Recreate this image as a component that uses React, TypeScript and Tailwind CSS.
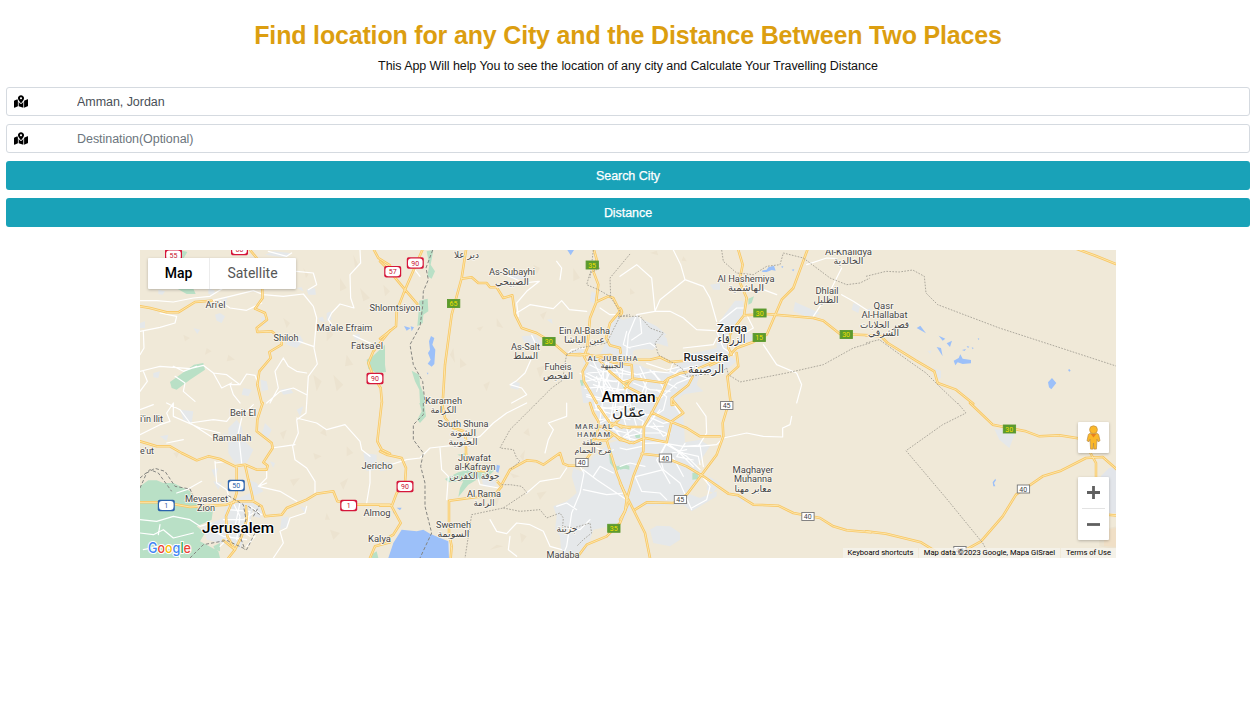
import { FaMapMarkedAlt } from "react-icons/fa";

type Tile = {
  x: number;
  y: number;
  urban?: string;
  green?: string;
  water?: string;
  shade?: string;
  minor?: string;
  major?: string;
  border?: string;
  dots?: string;
};

// Every tile is drawn at three times the map scale, from its own origin.
const tiles: Tile[] = [
  {
    x: 140,
    y: 248,
    urban:
      "M225 200L240 195 255 205 245 225 230 218ZM365 205L385 215 375 235 362 228ZM245 155L262 148 258 168 245 170ZM55 125L75 130 68 140 55 138ZM160 240L180 245 172 258ZM40 375L60 370 55 390 40 388ZM500 125L525 120 528 140 505 140ZM440 270L480 262 490 280 470 300 440 290ZM560 195L572 190 575 215 560 218ZM420 425L450 420 460 435 430 440ZM362 395L380 400 385 425 365 430ZM0 225L15 220 15 240 0 240ZM640 260L660 258 658 275 645 275ZM375 20L400 10 450 15 440 28 400 24ZM205 120L225 128 220 142 205 138ZM235 75L262 80 270 98 245 96ZM470 120L485 118 490 130ZM310 420L335 425 325 445 305 440ZM535 210L548 206 555 222 540 220Z",
    green:
      "M90 402L120 380 162 350 190 345 195 365 150 395 110 425 95 420ZM112 122L160 122 167 138 140 138ZM120 6L142 12 130 32 122 28ZM735 290L735 350 738 372 710 375 685 362 680 335 698 325Z",
    shade:
      "M490 60L505 80 498 90ZM560 230L580 260 560 280ZM600 90L620 120 600 130ZM580 380L610 410 590 430ZM265 320L285 335 260 340ZM430 210L450 225 440 240ZM520 380L545 400 530 430ZM660 120L690 150 670 160ZM130 260L150 270 135 280ZM620 320L640 350 615 355ZM640 20L655 50 645 60ZM200 300L215 310 195 320Z",
    minor:
      "M0 250L60 238 105 225 110 205 60 195M215 158L270 145 340 128 370 140 430 145 490 138 520 175 530 210 522 300 532 348 505 385 500 465M660 6L662 45 630 80 632 150 642 180 600 168 575 195 565 215 585 245M240 160L270 180 320 187 365 165M425 275L470 278 520 295M640 262L700 290M0 370L40 360 60 355 100 358 150 362 190 352 220 375 260 380 300 410 320 378 345 382 352 400M10 250L12 300 0 320M10 370L22 400 0 430M105 385L135 405 130 430 165 460M430 330L405 370 415 420 390 465M0 158L50 158 100 162 160 150 210 145 250 120M470 70L520 75 530 110 505 125M430 330L445 355 470 370 500 375M380 465L420 430 460 420 500 440M300 410L270 410 280 440 300 465M100 355L130 370 170 355M385 10L440 25 455 15M220 375L245 420 275 405",
    major:
      "M0 175L30 180 80 193 115 193 165 162 215 158M330 6L350 30 365 90 368 150 345 182 375 195 381 215 350 240 352 252 395 250 425 275 425 290 388 312 392 330 358 370 352 410 365 465M702 6L715 30 750 52M750 248L700 310 685 345 700 385 722 420 726 465",
  },
  {
    x: 380,
    y: 248,
    urban:
      "M715 205L750 235 750 465 610 465 600 400 612 350 660 320 682 270 680 240ZM425 265L465 262 490 290 440 300ZM560 315L610 300 610 318ZM400 400L420 405 415 425 390 420ZM635 130L655 140 650 170 630 160ZM385 80L440 78 440 92 395 94ZM530 380L560 385 545 400ZM500 215L515 212 518 228ZM220 120L230 125 225 135Z",
    green:
      "M140 10L160 6 152 50 165 70 155 92 142 85 148 50ZM118 158L143 152 145 190 130 200 128 225 112 235 115 200ZM0 290L15 300 12 345 0 330ZM95 368L118 380 120 410 132 440 135 465 120 465 118 425 105 400ZM600 395L612 400 605 415Z",
    water:
      "M153 264L163 270 157 290 166 305 163 348 155 356 143 347 152 335 144 315 150 305 147 280ZM72 234L92 240 80 248ZM92 235L102 238 95 250ZM562 6L582 6 572 22ZM140 374L145 374 144 380Z",
    shade:
      "M290 240L310 235 300 250ZM220 300L225 345 210 320ZM470 360L500 350 480 390ZM240 330L260 350 240 360ZM480 200L500 190 490 215ZM580 60L600 90 580 100ZM350 210L370 240 350 235ZM310 410L330 400 320 430ZM460 50L480 60 470 80ZM10 110L30 130 15 145ZM580 240L595 260 570 270Z",
    minor:
      "M415 205L410 165 440 130 478 100M410 195L450 170 520 182 545 158 568 185 620 190M475 100L430 105 400 90 350 70M455 262L470 295 455 330 435 375 410 398 390 410 425 420 440 440 395 465M560 320L575 305 620 300M660 180L690 200 720 200M540 95L545 60 530 40M625 375L680 370 750 380M615 400L660 390 700 400 750 395M640 340L660 380 690 425M680 340L670 370 650 430M700 350L720 385 710 440M640 410L700 430 750 420M740 250L730 290 750 300M620 440L680 455 720 440M690 370L670 420 690 460M730 340L725 400 745 440M120 85L100 60",
    major:
      "M258 6L245 90 215 200 195 350 188 465M245 92L275 88 295 105 320 105 330 118 350 118 370 150 397 142 405 200 425 240 470 255 520 285 560 320 600 322 625 318M127 6L75 125 50 190 48 235 0 272M0 40L25 65 75 125 112 168M642 6L650 35 640 70 655 110 648 165 630 210 622 300 612 325 622 345 608 370 612 400 630 430 650 465M648 162L685 145 700 150 720 190 690 225 678 270 690 292 720 300 722 315M560 320L600 318 650 325",
    border: "M158 6L138 60 145 95 130 130 128 175 120 235 90 290 100 350 128 400 135 465",
    dots: "M750 18L690 90 692 145M660 60L630 75 620 110 655 125 690 145 720 190 715 210M560 320L552 360 550 395 515 420 470 465M560 320L600 300 680 285 720 205 750 200M640 6L630 90",
  },
  {
    x: 620,
    y: 248,
    urban:
      "M345 158L368 158 375 198 350 225 330 275 325 320 350 340 300 380 240 375 230 410 250 430 180 440 150 465 0 465 0 345 60 350 100 375 150 370 180 345 200 320 290 300 290 235 310 205ZM20 235L60 210 110 235 140 260 100 280 110 300 45 305 20 330ZM525 162L600 195 570 210 520 190ZM270 110L300 105 300 125 280 125ZM380 255L400 260 395 280 360 285ZM700 165L720 175 715 195 695 185Z",
    green: "M385 152L402 145 395 165 385 170ZM5 405L25 400 25 420 10 420Z",
    water: "M425 68L440 65 445 58 462 53 467 68 455 66 440 72 428 72ZM515 65L523 64 520 70ZM483 56L490 54 488 60Z",
    shade: "M90 15L110 8 115 22ZM190 25L200 40 185 38ZM30 120L45 135 30 140Z",
    minor:
      "M105 190L150 190 190 210 230 245 285 248M105 190L120 155 195 95 182 50 160 6M195 95L250 115 270 150 290 220M105 190L50 200 25 260 20 325M105 190L95 90 50 50 0 85M560 50L620 30 650 32M665 60L630 130 580 205M665 140L700 160 750 192M380 200L400 240 375 255M430 290L470 350 530 375 545 410 530 465M380 130L430 125 470 140M20 300L90 285 110 300M0 365L50 380 100 370 150 375M40 405L90 425 150 430M60 380L80 420 70 460M100 370L130 420 110 465M200 390L150 370 160 340M290 250L310 300 340 320M300 220L350 180 370 180M190 300L280 290 290 270M230 370L280 380 300 370M130 400L170 420",
    major:
      "M355 6L368 50 358 100 380 150 372 202 350 230 330 260 325 300 335 320M372 202L440 198 520 205 580 210 610 218 660 258 750 262M562 6L520 120 485 155 440 260 400 282 350 300 315 335M45 335L90 335 120 328 150 342 195 338M310 335L270 352M350 315L355 355 322 385 332 465M0 180Q12 192 0 204",
    dots: "M305 6L310 40 350 75 400 80 440 55 480 50 490 15 550 30 630 90 680 110 720 105 750 90M0 205L60 205 90 240 130 255 105 285 115 320 150 340 185 360 200 385 300 375 320 360 325 380 360 402 500 375 610 350 700 300 750 285",
  },
  {
    x: 866,
    y: 248,
    urban: "M200 360L225 368 225 390 212 395ZM0 185L15 180 10 200ZM45 195L55 200 50 215ZM185 308L197 308 192 318Z",
    water:
      "M152 240L163 233 180 256ZM218 263L238 272 230 278ZM242 286L258 278 252 297ZM212 297L225 300 230 325ZM288 306L300 303 296 309ZM302 294L310 296 306 300ZM317 298L323 300 320 304ZM335 270L340 272 338 277ZM263 338L278 330 283 319 290 332 315 336 315 346 290 348 275 343 268 352ZM546 403L558 390 571 405 556 424 549 418ZM606 366L610 363 614 368 610 371Z",
    major: "M630 2L690 24 750 48M0 262L45 265 65 285 150 338 205 370 215 405 270 425 322 467",
    dots: "M0 85L60 70 100 72 140 66 175 85 180 135 215 170 400 240 600 305 753 355M0 285L40 275 130 340 180 375 220 415 275 467",
  },
  {
    x: 140,
    y: 403,
    urban:
      "M265 75L290 50 305 70 310 110 340 140 320 180 285 180 265 150ZM260 300L330 270 345 300 330 360 300 440 240 420 200 410 190 370 250 345ZM325 230L350 240 370 265 340 280ZM425 345L445 340 445 370 420 380ZM375 60L395 80 380 110 365 95ZM670 150L710 155 710 200 680 205ZM215 200L235 195 225 225ZM60 100L85 95 80 115ZM480 310L500 315 495 330ZM220 235L245 240 235 260ZM470 20L490 10 480 40ZM120 20L160 25 155 60 130 50ZM345 300L370 320 360 345 340 340ZM250 90L262 95 255 110ZM390 175L405 180 400 195Z",
    green: "M0 250L25 232 50 232 70 240 100 240 150 265 155 280 130 292 220 312 215 350 170 370 195 390 180 415 235 445 240 465 0 465ZM220 430L240 420 240 445 225 440ZM698 452L710 445 715 465 695 465Z",
    shade:
      "M540 90L555 75 560 100ZM600 240L625 225 610 260ZM420 90L440 80 430 110ZM570 380L600 390 580 410ZM520 150L545 160 525 170ZM100 150L120 145 110 165ZM450 230L480 225 460 250ZM620 130L640 150 620 160ZM560 330L570 350 555 350Z",
    minor:
      "M0 95L60 65 90 55 80 30 100 0M80 0L120 20 150 60 220 50 260 55 280 30M0 20L40 5M500 0L498 30 470 50 475 90 458 130 465 170 500 195 525 235 525 270M395 135L430 130 465 125M470 45L530 60 560 80 615 65 660 115 665 140 690 160M690 190L690 240 680 300M305 45L295 90 305 180M225 175L230 240 260 260 270 290M130 110L80 120M100 0L100 40 180 75 240 90M380 200L380 225 355 250 420 265 470 295M225 180L260 175M500 310L495 330 450 345 440 375 420 385 430 420 400 465M0 350L50 355 100 340 150 350 180 370 215 360M0 390L40 395 70 380 100 405 160 390M10 440L60 430 110 440 120 465M110 270L140 260 185 235M150 60L165 70 220 105M60 365L55 395M265 320L330 325 320 380 260 390M280 300L300 340 290 410M250 350L310 350 340 330M240 370L270 400 240 430M300 300L285 370 330 400M330 310L365 335M210 380L250 400 320 410M355 250L380 240M290 20L320 25 340 5M330 350L345 400 320 430",
    major:
      "M0 115L50 130 90 130 125 150 170 172 205 160 240 168 285 190 315 185 350 200 380 200 383 188 370 178 398 135 395 120 350 85 352 50 368 0M290 190L290 270 280 300M315 185L325 230 335 270 340 295M0 298L50 298 100 303 150 312 260 305 285 295 340 295 365 310 375 340 425 335 440 315 500 290 530 272 580 265 592 295 650 305 750 305M275 300L258 340 262 400 285 440 265 465M250 412L285 440 305 400 320 350 318 310M725 0L712 115 725 140 750 152M750 418L705 430 690 465",
    border: "M0 255L20 210 45 196 75 205 105 250 150 258 160 280M0 225L30 200 55 210 95 265M265 278L310 305 318 350 300 400 315 440M150 465L190 425 260 412 320 440 345 390M325 310L360 335M340 340L358 308",
  },
  {
    x: 380,
    y: 403,
    urban:
      "M580 195L605 205 640 160 690 120 750 100 750 300 735 350 690 370 640 380 620 440 590 465 545 465 540 400 525 380 530 340 520 310 560 295 590 270 575 220ZM650 0L750 0 750 110 680 110 650 60ZM0 175L40 180 30 200 0 205ZM305 225L350 235 345 250 310 250ZM235 105L270 100 275 130 240 130Z",
    green: "M118 0L132 0 138 40 120 60 112 50 125 25ZM195 228L235 208 265 200 325 200 340 185 345 200 320 225 290 230 265 245 235 282 240 255 250 235 205 238ZM232 155L260 150 255 165ZM685 135L695 165 710 190 730 185 748 188 748 200 725 195 708 205 690 180Z",
    water: "M65 380L110 385 130 380 150 392 205 415 207 465 25 465 40 420ZM350 185L360 188 355 210 348 205ZM50 314L65 314 60 322ZM38 324L46 326 42 332Z",
    shade: "M420 160L435 140 430 175ZM340 290L360 280 350 310ZM330 440L350 425 370 430ZM470 270L500 265 480 290ZM430 90L445 75 450 100ZM420 390L440 400 425 420ZM390 210L420 220 400 225Z",
    minor:
      "M180 135L185 200 205 220 200 290M0 195L80 170 120 165 150 135 240 125 300 100 340 60 380 30 440 0M600 190L612 210 600 270 575 330 560 430 545 465M610 200L650 230 740 290M330 350L350 385 380 392 410 360 450 365 490 385 510 430M495 150L505 110 520 80 505 60 560 40 560 0M440 270L480 235 540 225 560 195M640 130L680 150 700 140M610 260L680 275 735 270M640 220L660 190 700 210M590 320L560 300 530 310M510 430L545 440M290 215L300 245 355 255M390 400L385 440 410 460M560 375L600 380 630 350M670 20L700 80 740 90M660 60L700 40 750 50M700 0L690 60 720 100M650 10L710 20 745 5",
    major:
      "M0 145L20 155 65 165 78 195 75 240 50 270 35 310 62 360 40 395 0 418M0 308L35 308M186 0L195 45 220 75 252 85 258 110 258 150 265 190 290 203 320 205M350 233L365 250 340 280 290 282 207 293 207 390 215 430 212 465M365 245L390 200 440 172 470 175 490 185 540 150 550 182 565 188 600 188M618 170L640 140 638 112M630 0L640 30 655 55 652 100 638 112 680 112 700 95 750 120M680 112L695 160 710 210 745 300 720 360 680 400 620 425 590 465M655 10L690 60 750 75",
    border: "M130 0L130 35 100 65 100 110 130 150 122 190 135 240 135 310 155 390 120 465",
    dots: "M470 0L390 80 360 135 400 140 410 165 420 175 390 200M365 245L390 245 425 250 440 268 370 315 275 335 265 400 255 465M370 315L420 325 480 320 500 345 540 330 550 345 548 370 580 375 630 360 635 390 610 410 590 430",
  },
  {
    x: 620,
    y: 403,
    urban:
      "M0 0L160 0 190 60 180 120 240 110 270 130 230 190 250 215 200 270 240 285 290 265 290 280 215 325 190 305 50 310 20 330 0 330ZM90 380L110 368 150 370 180 390 180 410 150 430 100 420ZM345 280L380 285 370 300ZM265 220L300 240 280 270 260 260Z",
    green: "M217 210L235 205 235 228 217 230ZM45 95L60 95 58 105 48 105ZM0 190L12 188 18 182 28 195 12 197 0 200Z",
    minor:
      "M310 105L380 90 430 100 488 102 488 75 510 65 515 40M230 0L258 40 260 90 235 130 190 130 140 122M135 122L200 160 240 200M140 120L120 160 130 200 180 240 215 320M45 220L65 265 120 270 140 290M75 190L30 180 0 190M130 200L50 220M235 130L290 125 310 105M25 30L70 55 60 90 20 70M0 20L40 40 90 35M20 100L70 90 120 90M100 60L130 100 150 90M150 130L190 150 235 160 240 185M250 225L270 250 260 290 215 315M65 130L20 140 0 135M155 150L200 140M120 20L80 70 130 70M300 255L250 225M160 165L190 220",
    major:
      "M95 30L72 70 70 145 40 220 20 290 15 325 0 350M65 152L120 158 200 190 250 220 325 272 355 277 400 305 475 308 520 330 600 345 640 370 680 382 752 388M0 240L25 290 75 390 90 465M320 20L308 60 310 100 290 155 245 215 200 275 160 300 80 298 45 320M95 28L150 55 200 75 240 100 300 100M0 110L40 120 75 105 140 118 155 55 190 30 165 0M0 72L70 72",
  },
  {
    x: 866,
    y: 403,
    urban: "M385 78L450 85 430 135 400 110Z",
    shade: "M700 380L753 370 753 440 700 430Z",
    water: "M380 238L388 227 390 232 384 240 388 250 382 250Z",
    major:
      "M312 0L380 65 480 85 520 100 580 97 650 108M665 135L690 180 690 225M0 385L60 392 165 418 220 452 300 440 345 415 410 340 450 275 530 220 585 203 660 165 710 162 753 200M725 335L753 338",
    dots: "M275 0L300 30 230 65 120 143 240 285 350 420 375 465",
  },
  // Amman
  {
    x: 560,
    y: 310,
    urban:
      "M140 60L170 35 235 15 240 60 215 100 220 135 200 150 150 60ZM200 25L280 50 320 85 325 110 290 100 280 120 240 115ZM70 150L130 130 220 165 300 185 350 190 350 150 430 160 400 200 385 240 350 270 370 320 375 395 330 420 240 430 150 350 100 300 75 200Z",
    green: "M193 220L205 216 205 232 193 230ZM60 212L70 208 70 228 64 226ZM225 375L240 373 240 383 228 383Z",
    minor:
      "M80 190L120 210 170 215M75 235L130 230 190 240M90 165L130 185 130 260M100 300L180 290 250 300M110 200L130 260 120 330M140 210L170 260 160 330M80 260L140 275 200 270 290 275M60 190L110 215M115 330L180 320 250 320M170 240L210 280 230 350M200 240L190 320 210 390M290 275L350 220 400 200M240 170L260 215 245 250M290 240L320 260 310 300 280 320M265 320L310 340 330 335M230 350L190 380 245 395M330 210L355 180 400 170M270 180L300 210M340 280L360 310M260 160L320 180 360 170M145 155L140 210M270 350L320 370M255 400L320 398 350 420 400 470M320 398L290 450 330 520M370 410L420 405 430 470M100 260L110 300 150 310M215 90L245 70 240 20M375 400L350 440 400 450",
    major:
      "M110 138L150 135 190 152 225 150M110 138L160 158 215 165 218 205 195 235M118 150L150 185 205 232 250 255 290 265M190 218L225 206 310 218 325 205 360 190 400 182 450 160 490 142M398 200L385 225 335 265 335 285 345 282M325 205L310 240 290 280 275 309M345 280L335 265M165 340L185 352M120 350L155 350 180 325M128 352L165 375 180 390",
  },
];

const frame = (t: Tile) => `translate(${t.x} ${t.y}) scale(0.33333)`;

// text, centre x, baseline y, size, drawn width
type Label = [string, number, number, number, number?];

const places: Label[] = [
  ["Ari'el", 215.5, 308, 9, 20],
  ["Shiloh", 286, 341, 9, 25],
  ["Ma'ale Efraim", 344.5, 330.5, 9, 56],
  ["Fatsa'el", 367, 349, 9, 32],
  ["Shlomtsiyon", 395, 311, 9, 51],
  ["As-Subayhi", 512, 275, 9, 46],
  ["As-Salt", 525.5, 349.5, 9, 29],
  ["Ein Al-Basha", 584.5, 334, 9, 51],
  ["Fuheis", 558, 369.5, 9, 27],
  ["Karameh", 443.5, 403.5, 9, 37],
  ["South Shuna", 463, 426.5, 9, 51],
  ["Juwafat", 474.5, 460.5, 9, 33],
  ["al-Kafrayn", 475, 469.5, 9, 41],
  ["Al Rama", 484, 497, 9, 34],
  ["Swemeh", 453.5, 528, 9, 35],
  ["Madaba", 563, 558, 9, 33],
  ["Beit El", 243, 416, 9, 26],
  ["i'in Ilit", 151.5, 422, 9, 23],
  ["Ramallah", 232, 441, 9, 39],
  ["e'ut", 147, 454, 9, 14],
  ["Jericho", 377, 469, 9, 31],
  ["Mevaseret", 206.5, 502, 9, 43],
  ["Zion", 206, 511, 9, 18],
  ["Almog", 377, 516, 9, 27],
  ["Kalya", 379.5, 542, 9, 23],
  ["Al Hashemiya", 746, 282, 9, 57],
  ["Dhlail", 827, 294, 9, 23],
  ["Al-Khalidya", 848.5, 255, 9, 47],
  ["Qasr", 883.5, 309, 9, 20],
  ["Al-Hallabat", 884.5, 318, 9, 46],
  ["Maghayer", 753, 473, 9, 41],
  ["Muhanna", 753, 482, 9, 38],
];

const arabic: Label[] = [
  ["دير علا", 466.5, 258, 9.5, 25],
  ["الصبيحي", 512, 284.5, 9.5, 34],
  ["السلط", 525.5, 358.5, 9.5, 25],
  ["عين الباشا", 584.5, 343, 9.5, 41],
  ["الفحيص", 558, 378.5, 9.5, 30],
  ["الكرامة", 443.5, 412.5, 9.5, 26],
  ["الشونة", 463, 436, 9.5, 26],
  ["الجنوبية", 463, 444.5, 9.5, 29],
  ["جوفة الكفرين", 474.5, 479, 9.5, 50],
  ["الرامة", 484, 506, 9.5, 21],
  ["السويمة", 453.5, 537, 9.5, 32],
  ["جرينة", 567, 531.5, 9.5, 21],
  ["الهاشمية", 746, 291, 9.5, 36],
  ["الظليل", 826, 303, 9.5, 25],
  ["الخالدية", 848.5, 264, 9.5, 30],
  ["قصر الحلابات", 884.5, 327.5, 9.5, 49],
  ["الشرقي", 883.5, 336, 9.5, 31],
  ["معابر مهنا", 753, 491.5, 9.5, 37],
  ["الجبيهة", 612, 368, 8, 23],
  ["منطقة", 592, 445, 8, 20],
  ["مرج الحمام", 593, 453, 8, 37],
];

const towns: Label[] = [
  ["Zarqa", 732, 332, 11.5, 30],
  ["Russeifa", 706, 361, 11.5, 45],
];

const townsArabic: Label[] = [
  ["الزرقاء", 731.5, 343, 11.5, 28],
  ["الرصيفة", 706, 372.5, 11.5, 36],
];

const districts: Label[] = [
  ["AL JUBEIHA", 612.5, 360.5, 7.5, 50],
  ["MARJ AL", 593.5, 429, 7.5, 37],
  ["HAMAM", 593.5, 437, 7.5, 33],
];

function Labels({ items, className, spread }: { items: Label[]; className: string; spread?: boolean }) {
  return (
    <g className={className} textAnchor="middle" paintOrder="stroke" strokeLinejoin="round">
      {items.map(([text, x, y, size, width]) => (
        <text
          key={text}
          x={x}
          y={y}
          fontSize={size}
          textLength={width}
          lengthAdjust={spread ? "spacing" : "spacingAndGlyphs"}
        >
          {text}
        </text>
      ))}
    </g>
  );
}

type Kind = "red" | "blue" | "green" | "white";
const shields: [string, number, number, Kind][] = [
  ["55", 173.5, 255, "red"],
  ["60", 239.5, 249.5, "red"],
  ["57", 392.7, 271.7, "red"],
  ["90", 415.3, 263, "red"],
  ["90", 375, 378.5, "red"],
  ["90", 405, 486.5, "red"],
  ["1", 348.7, 505.5, "red"],
  ["1", 166.3, 505.5, "blue"],
  ["50", 236.3, 485.5, "blue"],
  ["65", 453.5, 303.5, "green"],
  ["35", 592.1, 265, "green"],
  ["30", 548.8, 341.5, "green"],
  ["30", 759.8, 313, "green"],
  ["15", 759.1, 337.5, "green"],
  ["30", 846.1, 334.5, "green"],
  ["30", 1009.3, 429, "green"],
  ["35", 613.7, 528.3, "green"],
  ["45", 726.6, 405.5, "white"],
  ["40", 581.8, 462.5, "white"],
  ["40", 665.3, 458, "white"],
  ["45", 680.3, 499.5, "white"],
  ["40", 807.8, 516.5, "white"],
  ["40", 1023.3, 489, "white"],
  ["40", 959.8, 550.5, "white"],
];

function Shield({ text, x, y, kind }: { text: string; x: number; y: number; kind: Kind }) {
  const ink = { red: "#c8102e", blue: "#2b5fa8", green: "#f0e000", white: "#454545" }[kind];
  const edge = { red: "#d5163a", blue: "#2c63ad", green: "#5c9a2e", white: "#777777" }[kind];
  const coloured = kind === "red" || kind === "blue";
  return (
    <g>
      {coloured ? (
        <>
          <rect x={x - 8.5} y={y - 5.7} width={17} height={11.4} rx={1.8} fill={edge} />
          <rect x={x - 7.3} y={y - 4.6} width={14.6} height={9.2} rx={3} fill="#fff" />
        </>
      ) : (
        <rect
          x={x - 6}
          y={y - 4}
          width={12.3}
          height={8}
          fill={kind === "green" ? "#5c9a2e" : "#fff"}
          stroke={edge}
          strokeWidth={0.9}
        />
      )}
      <text x={x} y={y + 2.5} fontSize={7} textAnchor="middle" fill={ink}>
        {text}
      </text>
    </g>
  );
}

function MapCanvas() {
  return (
    <svg viewBox="140 250 976 308" className="block h-full w-full font-[Roboto,'DejaVu_Sans',sans-serif]">
      <rect x="140" y="250" width="976" height="308" fill="#f0e9d8" />
      {tiles.map((t, i) => (
        <g key={i} transform={frame(t)}>
          <path d={t.shade} fill="#ece3d0" />
          <path d={t.urban} fill="#e5e8ea" />
        </g>
      ))}
      {tiles.map((t, i) => (
        <g key={i} transform={frame(t)}>
          <path d={t.green} fill="#b9e0c6" />
          <path d={t.water} fill="#9cc0f9" />
        </g>
      ))}
      <path d="M1101 476L1109 468 1116 468V513H1101Z" fill="#e2e5ea" />
      <path d="M1104 530L1116 528V547L1104 546Z" fill="#f0dfc6" />
      <g fill="none" strokeLinejoin="round" strokeLinecap="round">
        {tiles.map((t, i) => (
          <path key={i} transform={frame(t)} d={t.minor} stroke="#fff" strokeWidth={3.6} />
        ))}
        {tiles.map((t, i) => (
          <path key={i} transform={frame(t)} d={t.major} stroke="#f8c765" strokeWidth={7.6} />
        ))}
        {tiles.map((t, i) => (
          <path key={i} transform={frame(t)} d={t.major} stroke="#fde7ae" strokeWidth={2.8} />
        ))}
      </g>
      <g fill="none">
        {tiles.map((t, i) => (
          <g key={i} transform={frame(t)}>
            <path d={t.border} stroke="#858581" strokeWidth={3} strokeDasharray="10 6" />
            <path d={t.dots} stroke="#9b978d" strokeWidth={2.4} strokeDasharray="5 4" />
          </g>
        ))}
      </g>
      {shields.map(([text, x, y, kind], i) => (
        <Shield key={i} text={text} x={x} y={y} kind={kind} />
      ))}
      <Labels items={places} className="fill-[#454545] stroke-[#faf7f0] stroke-[1.6px]" />
      <Labels
        items={arabic}
        className="fill-[#454545] stroke-[#faf7f0] stroke-[1.6px] font-['DejaVu_Sans',sans-serif]"
      />
      <Labels items={districts} spread className="fill-[#5c5f62] stroke-[#faf7f0] stroke-[1.6px] font-medium" />
      <Labels items={towns} className="fill-[#1f1f1f] stroke-white stroke-[2px] font-medium" />
      <Labels
        items={townsArabic}
        className="fill-[#333] stroke-white stroke-[2px] font-['DejaVu_Sans',sans-serif]"
      />
      <Labels
        items={[
          ["Amman", 628.5, 402, 15.5, 54],
          ["Jerusalem", 238, 532.5, 15.5, 72],
        ]}
        className="fill-black stroke-white stroke-[2px] font-medium"
      />
      <Labels
        items={[["عمّان", 629, 417, 14, 34]]}
        className="fill-[#222] stroke-white stroke-[2px] font-['DejaVu_Sans',sans-serif]"
      />
      <text
        x={148}
        y={552.5}
        fontSize={14}
        textLength={43}
        lengthAdjust="spacingAndGlyphs"
        paintOrder="stroke"
        className="stroke-white stroke-[2px] font-[Inter,sans-serif] font-medium"
      >
        <tspan fill="#4285f4">G</tspan>
        <tspan fill="#ea4335">o</tspan>
        <tspan fill="#fbbc04">o</tspan>
        <tspan fill="#4285f4">g</tspan>
        <tspan fill="#34a853">l</tspan>
        <tspan fill="#ea4335">e</tspan>
      </text>
    </svg>
  );
}

function Pegman() {
  return (
    <svg viewBox="0 0 15 25" className="h-[25px] w-[15px]">
      <path
        d="M4 8.6h7c1 0 1.6.6 1.8 1.6l1.2 5.6-2 .9-1-2.6-.6 10H7.9L7.5 18l-.4 6.1H4.6l-.6-10-1 2.6-2-.9 1.200-5.600C2.400 9.200 3 8.600 4 8.600Z"
        fill="#fbb829"
        stroke="#b98d4a"
        strokeWidth=".7"
      />
      <path d="M4.800 9h5.400L7.500 12.500Z" fill="#e8801f" />
      <circle cx="7.500" cy="4.700" r="3.900" fill="#fbb829" stroke="#c08f45" strokeWidth=".7" />
    </svg>
  );
}

function Field({ value, placeholder }: { value?: string; placeholder?: string }) {
  return (
    <label className="flex h-[29px] items-center rounded-[3px] border border-[#d5dae0] bg-white pl-[7px]">
      <FaMapMarkedAlt className="h-[13px] w-3.5 shrink-0 text-black" />
      <input
        className="ml-[49px] min-w-0 flex-1 bg-transparent pt-0.5 text-[12.5px] tracking-[-0.05px] text-[#495057] outline-none placeholder:text-[#6c757d]"
        defaultValue={value}
        placeholder={placeholder}
      />
    </label>
  );
}

function ActionButton({ children }: { children: string }) {
  return (
    <button className="h-[29px] rounded-[3px] bg-[#19a2b8] pt-0.5 text-[12.5px] leading-none tracking-[-0.05px] text-white [-webkit-text-stroke:0.25px_white]">
      {children}
    </button>
  );
}

export default function App() {
  return (
    <main className="min-h-screen bg-white font-['Liberation_Sans',Arial,sans-serif]">
      <header className="flex flex-col items-center pt-5 pr-0.5 text-center">
        <h1 className="text-[25px] leading-[30px] font-bold tracking-[-0.17px] whitespace-nowrap text-[#dc9e10]">
          Find location for any City and the Distance Between Two Places
        </h1>
        <p className="mt-[7px] text-[12.5px] leading-[18px] tracking-[-0.065px] whitespace-nowrap text-[#111]">
          This App Will help You to see the location of any city and Calculate Your Travelling Distance
        </p>
      </header>

      <form className="mt-3 flex flex-col gap-2 pr-2 pl-1.5" onSubmit={(e) => e.preventDefault()}>
        <Field value="Amman, Jordan" />
        <Field placeholder="Destination(Optional)" />
        <ActionButton>Search City</ActionButton>
        <ActionButton>Distance</ActionButton>
      </form>

      <section className="relative mt-[23px] ml-[140px] h-[308px] w-[976px] overflow-hidden font-[Roboto,sans-serif]">
        <MapCanvas />

        <div className="absolute top-2 left-2 flex h-[31px] w-[148px] rounded-[1px] bg-white text-[14px] shadow-[0_1px_3px_rgba(0,0,0,0.25)]">
          <button className="w-[62px] border-r border-[#ececec] font-medium text-black">Map</button>
          <button className="flex-1 pr-px text-[#565656]">Satellite</button>
        </div>

        <button
          className="absolute top-[172px] right-[7px] flex h-[31px] w-[31px] items-center justify-center rounded-[1px] bg-white shadow-[0_1px_3px_rgba(0,0,0,0.25)]"
          aria-label="Street View"
        >
          <Pegman />
        </button>

        <div className="absolute top-[227px] right-[7px] flex h-[63px] w-[31px] flex-col items-center rounded-[1px] bg-white shadow-[0_1px_3px_rgba(0,0,0,0.25)]">
          <button className="flex flex-1 items-center justify-center" aria-label="Zoom in">
            <svg viewBox="0 0 13 13" className="size-[13px]" fill="#606060">
              <path d="M5.100 0h2.800v5.100H13v2.800H7.900V13H5.100V7.900H0V5.100h5.100Z" />
            </svg>
          </button>
          <span className="h-px w-[23px] bg-[#e3e3e3]" />
          <button className="flex flex-1 items-center justify-center" aria-label="Zoom out">
            <svg viewBox="0 0 13 13" className="size-[13px]" fill="#606060">
              <path d="M0 5.100h13v2.800H0Z" />
            </svg>
          </button>
        </div>

        <div className="absolute right-0 bottom-0 flex h-2.5 items-center gap-px text-[7.6px] leading-none whitespace-nowrap text-black">
          <span className="flex h-full w-[75px] items-center justify-center bg-[#f5f3ee]/75">Keyboard shortcuts</span>
          <span className="flex h-full w-[141px] items-center justify-center bg-[#f5f3ee]/75">
            Map data ©2023 Google, Mapa GISrael
          </span>
          <span className="flex h-full w-[55px] items-center justify-center bg-[#f5f3ee]/75">Terms of Use</span>
        </div>
      </section>
    </main>
  );
}
